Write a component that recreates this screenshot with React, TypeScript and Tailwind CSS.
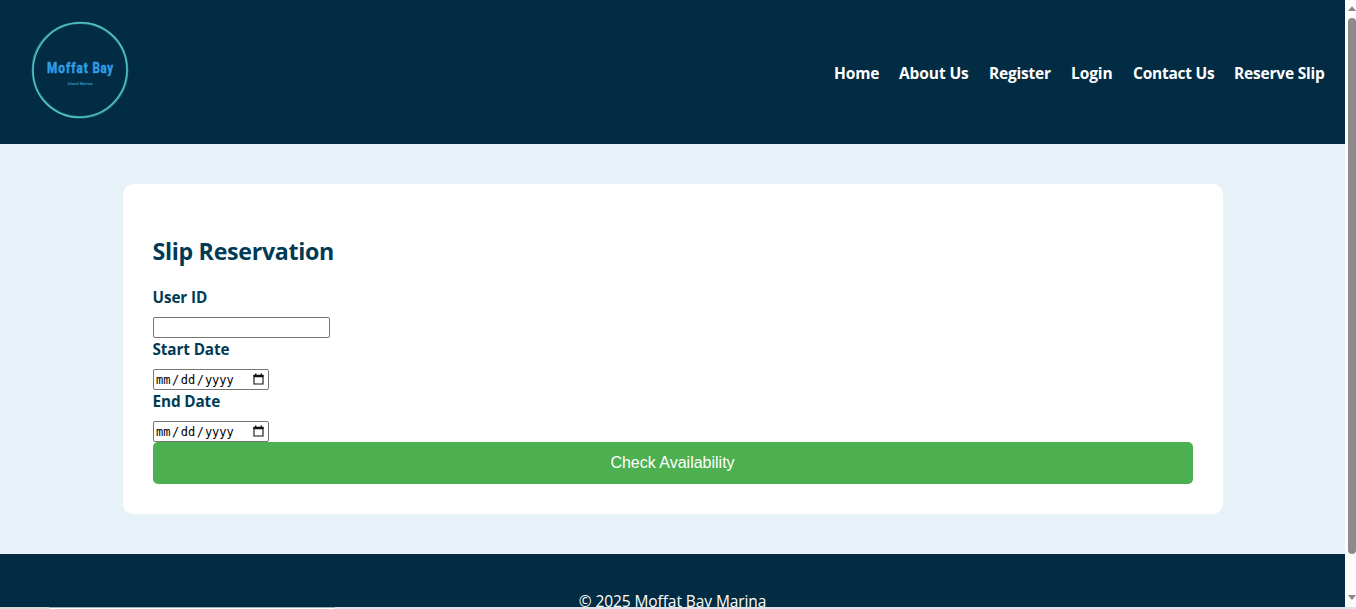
import React from "react";

const navItems = [
  { label: "Home", style: "w-[45px] tracking-[-0.15px]" },
  { label: "About Us", style: "w-[70px] tracking-[-0.1px]" },
  { label: "Register", style: "w-[62px] tracking-[-0.2px]" },
  { label: "Login", style: "w-[42px] tracking-[-0.1px]" },
  { label: "Contact Us", style: "w-[81px] tracking-[-0.25px]" },
  { label: "Reserve Slip", style: "w-[91px] tracking-[-0.2px]" },
];

function Logo() {
  return (
    <svg width="100" height="100" viewBox="0 0 100 100" className="block" aria-label="Moffat Bay Island Marina">
      <circle cx="50" cy="50" r="47.2" fill="none" stroke="#348f9b" strokeWidth="2.2" />
      <ellipse cx="50" cy="50" rx="46.6" ry="47.6" fill="none" stroke="#55c8c8" strokeWidth="1.1" transform="rotate(35 50 50)" />
      <g fill="#2f9ee6" stroke="#2f9ee6" strokeWidth="0.5" fontFamily="Roboto, sans-serif" fontWeight="700" fontSize="14">
        <text transform="translate(17 52.8) scale(.84 1)" textLength="48.5" lengthAdjust="spacing">
          Moffat
        </text>
        <text transform="translate(62.5 52.8) scale(.82 1)" textLength="25" lengthAdjust="spacing">
          Bay
        </text>
      </g>
      <text x="37.5" y="65" textLength="25" lengthAdjust="spacingAndGlyphs" fill="#2f8fc8" fontFamily="Roboto, sans-serif" fontWeight="700" fontSize="3.8">
        Island Marina
      </text>
    </svg>
  );
}

function Label({ children }: { children: React.ReactNode }) {
  return (
    <label className="block h-[21px] pt-px text-[15.3px] leading-[21px] font-bold tracking-[-0.12px] whitespace-nowrap text-[#003b55]">
      {children}
    </label>
  );
}

function DateField() {
  return (
    <div className="mt-[10px] flex h-[21px] w-[116px] items-center justify-between rounded-[2px] border border-[#767676] bg-white pr-[4px] pl-[2px] font-['DejaVu_Sans_Mono',monospace] text-[12px] leading-[19px] text-black">
      <span className="flex pt-px">
        <span className="px-[0.5px]">mm</span>
        <span className="px-[1px]">/</span>
        <span className="px-[0.5px]">dd</span>
        <span className="px-[1px]">/</span>
        <span>yyyy</span>
      </span>
      <svg width="11" height="12" viewBox="0 0 11 12" className="mb-[2px] block">
        <path d="M1 2.5h9v8.5H1z" fill="none" stroke="#111" strokeWidth="1.1" />
        <path d="M.5 1.7h10v2.5H.5zM2 .6h1.4v1.6H2zM7.6.6H9v1.6H7.6z" fill="#111" />
      </svg>
    </div>
  );
}

function Scrollbar() {
  return (
    <div className="flex w-[11px] shrink-0 flex-col items-end bg-[#fcfcfc]">
      <svg width="8" height="18" viewBox="0 0 8 18" className="block shrink-0">
        <path d="M0 11L4 6.2L8 11z" fill="#858585" />
      </svg>
      <div className="h-[536px] w-[8px] shrink-0 rounded-[4px] bg-[#8b8b8b]" />
      <svg width="8" height="53" viewBox="0 0 8 53" className="block shrink-0">
        <path d="M0 41h8L4 46z" fill="#858585" />
      </svg>
    </div>
  );
}

export default function App() {
  return (
    <div className="flex h-[609px] flex-col overflow-hidden bg-[#e6f1f8] font-['Open_Sans','Noto_Sans',sans-serif]">
      <div className="flex h-[607px] shrink-0 overflow-hidden">
        <div className="flex min-w-0 flex-1 flex-col">
          <header className="flex h-[144px] shrink-0 items-center justify-between bg-[#022c43] pr-[20px] pl-[30px]">
            <div className="pb-[4px]">
              <Logo />
            </div>
            <nav className="flex gap-[20px] pt-[3px] text-[15.5px] leading-[21px] font-bold whitespace-nowrap text-white">
              {navItems.map((item) => (
                <a key={item.label} href="#" className={item.style}>
                  {item.label}
                </a>
              ))}
            </nav>
          </header>
          <main className="flex h-[410px] shrink-0 justify-center py-[40px]">
            <section className="w-[1100px] rounded-[10px] bg-white px-[30px] pt-[50px]">
              <h2 className="h-[32px] text-[23.2px] leading-[35px] font-bold tracking-[-0.3px] whitespace-nowrap text-[#003b55]">Slip Reservation</h2>
              <form className="pt-[20px]">
                <Label>User ID</Label>
                <input type="text" aria-label="User ID" className="mt-[10px] block h-[21px] w-[177px] rounded-[2px] border border-[#767676] bg-white px-[3px] text-[13px] outline-none" />
                <Label>Start Date</Label>
                <DateField />
                <Label>End Date</Label>
                <DateField />
                <button type="button" className="block h-[42px] w-full rounded-[5px] bg-[#4caf50] font-['Liberation_Sans',sans-serif] text-[16px] leading-[42px] text-white">
                  Check Availability
                </button>
              </form>
            </section>
          </main>
          <footer className="h-[53px] shrink-0 overflow-hidden bg-[#022c43] pt-[36px] text-center text-[15.5px] leading-[22px] tracking-[-0.08px] whitespace-nowrap text-white">
            © 2025 Moffat Bay Marina
          </footer>
        </div>
        <Scrollbar />
      </div>
      <div className="flex h-[2px] shrink-0">
        <div className="w-[49px] bg-[#dcdad9]" />
        <div className="w-[286px] border-t border-[#9db1ba] bg-white" />
        <div className="flex-1 bg-[#dde3e8]" />
      </div>
    </div>
  );
}
